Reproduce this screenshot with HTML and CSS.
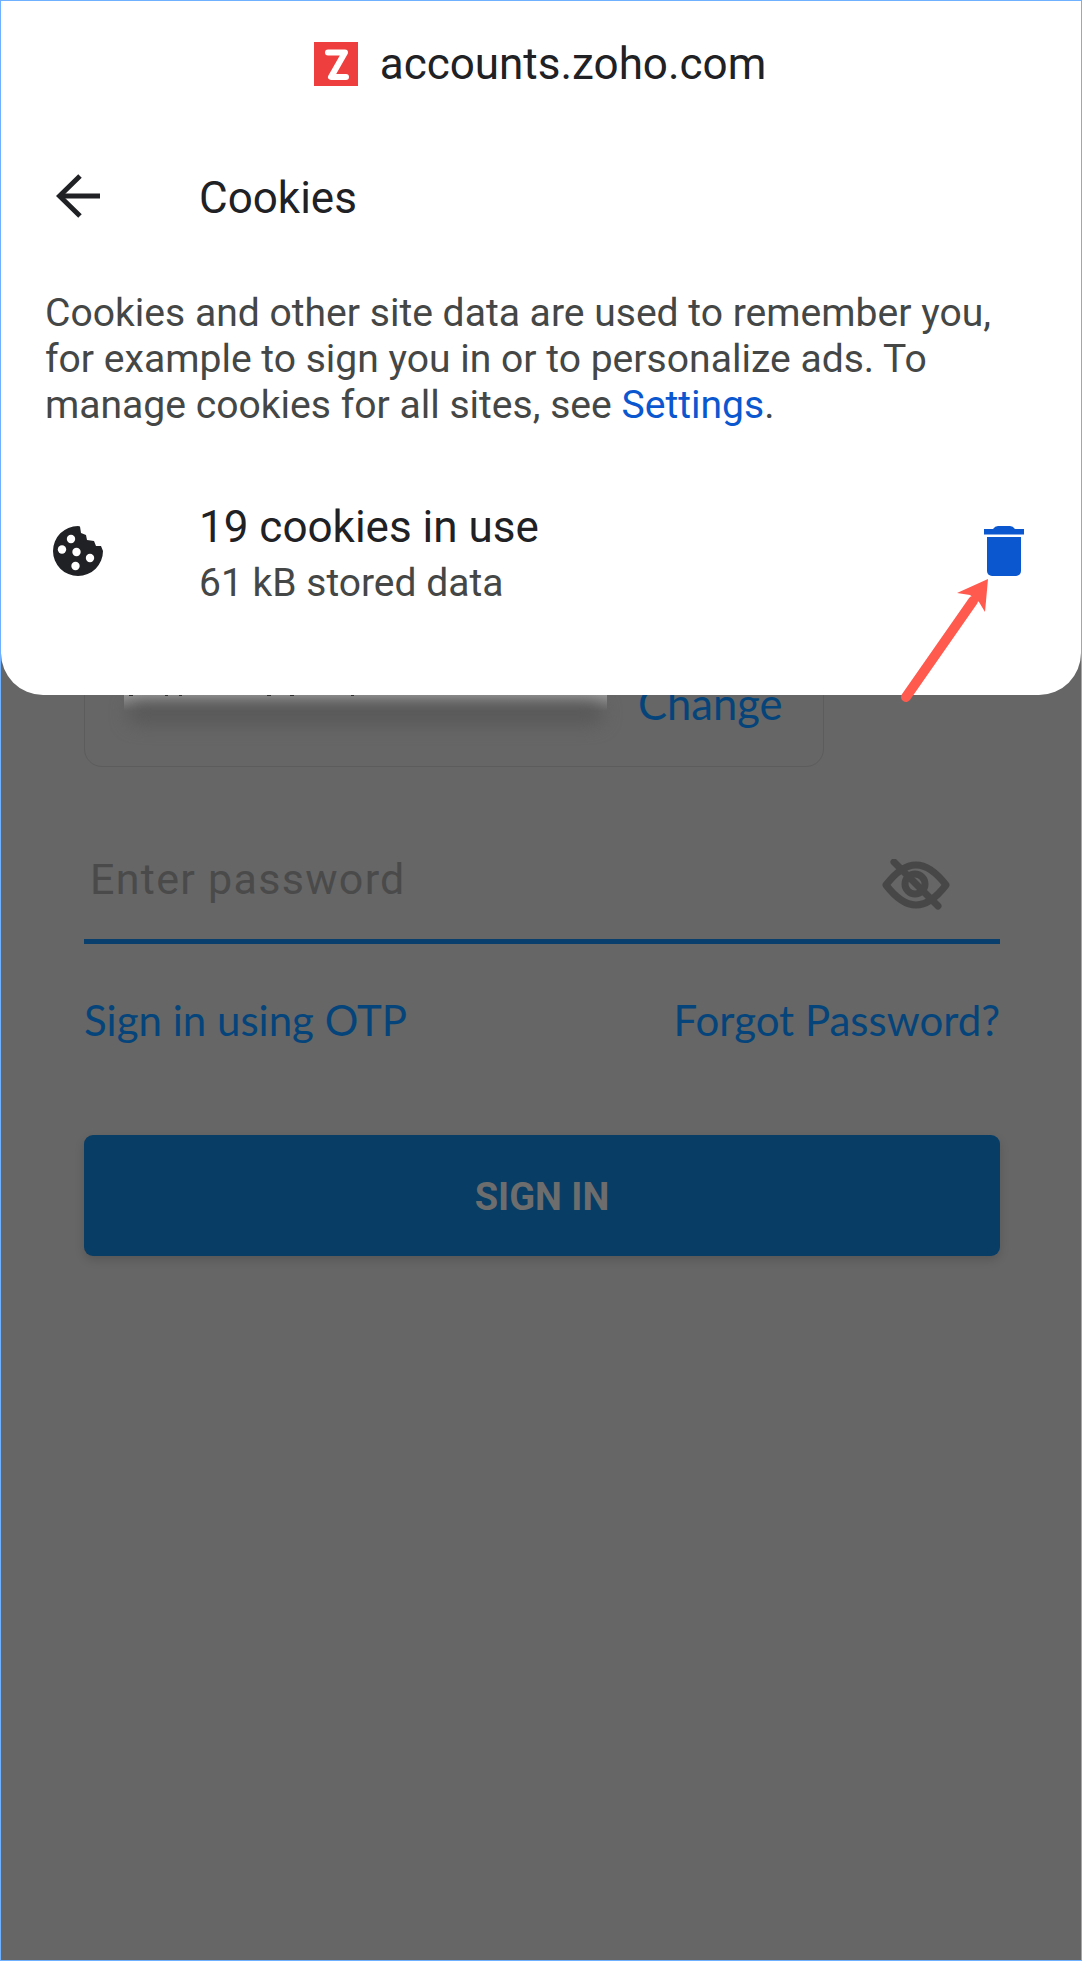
FILE: index.html
```html
<!DOCTYPE html>
<html lang="en">
<head>
<meta charset="utf-8">
<title>Cookies</title>
<link rel="stylesheet" href="styles.css">
</head>
<body>
<div class="frame">
  <main class="login">
    <div class="account-card">
      <div class="account-blur"><span class="blur-line"></span></div>
      <a class="change">Change</a>
    </div>
    <div class="password-field">
      <span class="placeholder">Enter password</span>
      <svg class="eye" viewBox="0 0 68 52" width="68" height="52" fill="none" stroke="#474747" stroke-width="7" stroke-linecap="round" stroke-linejoin="round">
        <path d="M4 26C14 13 24 6 34 6s20 7 30 20C54 39 44 46 34 46S14 39 4 26Z"/>
        <circle cx="33" cy="25" r="10"/>
        <path d="M12 3 56 47"/>
      </svg>
    </div>
    <div class="links">
      <a>Sign in using OTP</a>
      <a>Forgot Password?</a>
    </div>
    <button class="signin">SIGN IN</button>
  </main>

  <section class="sheet">
    <header class="site">
      <svg class="site-logo" viewBox="0 0 44 44" width="44" height="44">
        <rect width="44" height="44" fill="#ef3e3e"/>
        <path d="M14 10.500H31L17 35H32" fill="none" stroke="#fff" stroke-width="6" stroke-linecap="round" stroke-linejoin="round"/>
      </svg>
      <span class="site-name">accounts.zoho.com</span>
    </header>
    <div class="title-row">
      <svg class="back" viewBox="0 0 44 44" width="44" height="44" fill="none" stroke="#202124" stroke-width="5">
        <path d="M44 22H4"/>
        <path d="M24 2 3.500 22 24 42"/>
      </svg>
      <h1 class="title">Cookies</h1>
    </div>
    <p class="desc">Cookies and other site data are used to remember you, for example to sign you in or to personalize ads. To manage cookies for all sites, see <a class="settings">Settings</a>.</p>
    <div class="usage">
      <svg class="cookie" viewBox="0 0 50 50" width="50" height="50">
        <path fill="#202124" d="M27 .5 28 7 33 9 34 14 41 15 43 20 48 20 50 25A25 25 0 1 1 25 0Z"/>
        <g fill="#fff">
          <circle cx="18" cy="13" r="4.200"/>
          <circle cx="9" cy="23.500" r="4.200"/>
          <circle cx="23.500" cy="26" r="4.200"/>
          <circle cx="37" cy="32" r="4.200"/>
          <circle cx="22.500" cy="40" r="4.200"/>
        </g>
      </svg>
      <div class="usage-text">
        <div class="usage-count">19 cookies in use</div>
        <div class="usage-size">61 kB stored data</div>
      </div>
      <svg class="trash" viewBox="0 0 40 50" width="40" height="50">
        <path fill="#0b57d0" d="M0 3H9Q11 0 14 0H26Q29 0 31 3H40V8.500H0Z"/>
        <path fill="#0b57d0" d="M3 11H37V45A5 5 0 0 1 32 50H8A5 5 0 0 1 3 45Z"/>
      </svg>
    </div>
  </section>

  <svg class="callout" viewBox="0 0 100 140" width="100" height="140">
    <path d="M13 133 80 37" fill="none" stroke="#ff5a4d" stroke-width="10" stroke-linecap="round"/>
    <path fill="#ff5a4d" d="M95 15 64 29 77 31 86 38 92 48Z"/>
  </svg>
</div>
</body>
</html>
```
FILE: styles.css
```css
* {
  box-sizing: border-box;
}

html,
body {
  margin: 0;
  padding: 0;
}

body {
  font-family: Roboto, "Liberation Sans", sans-serif;
}

.frame {
  position: relative;
  width: 1082px;
  height: 1961px;
  overflow: hidden;
  background: #666666;
  border: 1px solid #6fb0ff;
}

/* dimmed login page behind the sheet */
.login {
  display: flex;
  flex-direction: column;
  padding: 629px 81px 0 83px;
}

.account-card {
  display: flex;
  align-items: flex-start;
  gap: 31px;
  width: 740px;
  height: 137px;
  padding: 64px 0 0 39px;
  border: 1px solid #5c5c5c;
  border-radius: 18px;
}

.account-blur {
  display: flex;
  align-items: center;
  flex: none;
  width: 483px;
  height: 42px;
  padding: 0 4px;
  background:
    linear-gradient(#222, #222) 5px 0 / 4px 1px no-repeat,
    linear-gradient(#222, #222) 41px 0 / 3px 1px no-repeat,
    linear-gradient(#222, #222) 55px 0 / 3px 1px no-repeat,
    linear-gradient(#222, #222) 143px 0 / 4px 1px no-repeat,
    linear-gradient(#222, #222) 166px 0 / 4px 1px no-repeat,
    linear-gradient(#222, #222) 227px 0 / 3px 1px no-repeat,
    linear-gradient(#989898 0, #666666 38%);
}

.blur-line {
  display: block;
  width: 100%;
  height: 22px;
  margin-top: -6px;
  background: #585858;
  border-radius: 11px;
  filter: blur(9px);
}

.change {
  margin-top: -14px;
  font-family: Lato, sans-serif;
  font-size: 43.500px;
  line-height: 44px;
  color: #05447a;
}

.password-field {
  display: flex;
  align-items: flex-start;
  justify-content: space-between;
  height: 177px;
  padding: 90px 50px 0 6px;
  border-bottom: 5px solid #083f6c;
}

.placeholder {
  font-size: 43px;
  line-height: 44px;
  letter-spacing: 1.300px;
  color: #4a4a4a;
}

.eye {
  margin-top: 2px;
}

.links {
  display: flex;
  justify-content: space-between;
  margin-top: 54px;
  font-family: Lato, sans-serif;
  font-size: 42px;
  line-height: 44px;
  color: #05447a;
}

.signin {
  display: block;
  width: 100%;
  height: 121px;
  margin-top: 93px;
  padding: 3px 0 0;
  border: 0;
  border-radius: 9px;
  background: #083d66;
  box-shadow: 0 4px 10px rgba(0, 0, 0, 0.15);
  font-family: Roboto, sans-serif;
  font-size: 38px;
  font-weight: 700;
  color: #6d6d6d;
}

/* white bottom sheet */
.sheet {
  position: absolute;
  top: 0;
  left: 0;
  right: 0;
  height: 694px;
  padding: 41px 0 0;
  background: #fff;
  border-radius: 0 0 42px 42px;
}

.site {
  display: flex;
  align-items: center;
  justify-content: center;
  gap: 22px;
  height: 44px;
  padding-right: 2px;
}

.site-name {
  font-size: 44px;
  line-height: 44px;
  color: #202124;
}

.title-row {
  display: flex;
  align-items: center;
  gap: 99px;
  height: 44px;
  margin-top: 88px;
  padding-left: 55px;
}

.title {
  margin: 3px 0 0;
  font-size: 44px;
  font-weight: 400;
  line-height: 44px;
  color: #202124;
}

.desc {
  margin: 72px 0 0;
  padding: 0 44px;
  font-size: 39.100px;
  line-height: 46px;
  color: #444746;
}

.settings {
  color: #0b57d0;
}

.usage {
  display: flex;
  align-items: flex-start;
  padding: 0 57px 0 52px;
}

.cookie {
  margin-top: 98px;
  flex: none;
}

.usage-text {
  flex: 1;
  margin-left: 96px;
  padding-top: 74px;
}

.usage-count {
  font-size: 44px;
  line-height: 50px;
  color: #202124;
}

.usage-size {
  margin-top: 9px;
  font-size: 39px;
  line-height: 44px;
  color: #444746;
}

.trash {
  margin-top: 98px;
  flex: none;
}

.callout {
  position: absolute;
  top: 563px;
  left: 892px;
}
```
